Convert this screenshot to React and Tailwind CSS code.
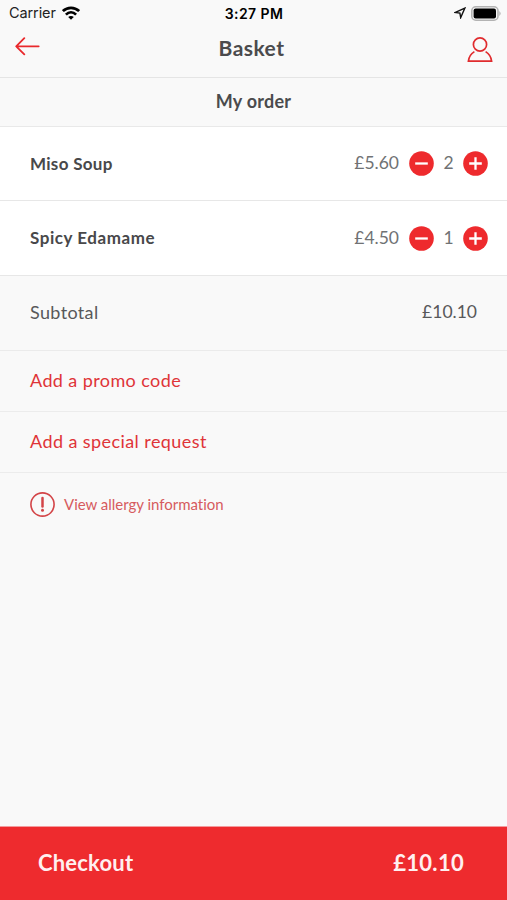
const items = [
  { name: 'Miso Soup', price: '£5.60', count: 2, nameClass: 'tracking-[0.3px]', row: 'h-[74px]' },
  { name: 'Spicy Edamame', price: '£4.50', count: 1, nameClass: 'tracking-[0.55px]', row: 'h-[75px]' },
];

function RoundButton({ plus }) {
  return (
    <button className="block size-[25px] shrink-0" aria-label={plus ? 'Increase' : 'Decrease'}>
      <svg width="25" height="25" viewBox="0 0 25 25">
        <circle cx="12.5" cy="12.5" r="12.3" fill="#ee2a2d" />
        <path d={plus ? 'M6.2 12.5H18.8M12.5 6.2V18.8' : 'M6.2 12.5H18.8'} stroke="#fff" strokeWidth="2.3" />
      </svg>
    </button>
  );
}

function StatusBar() {
  return (
    <div className="grid h-7 grid-cols-3 items-center pb-[2px] pl-[9px] pr-[6px] font-['Inter',sans-serif] text-black">
      <div className="flex items-center gap-[6px]">
        <span className="text-[14.5px] tracking-[-0.1px] text-[#222]">Carrier</span>
        <svg width="18" height="14" viewBox="0 0 18 14" fill="none" stroke="#000" strokeWidth="2.7">
          <path d="M0.9 5.1C5.5 0.7 12.5 0.7 17.1 5.1" />
          <path d="M3.9 8.6C6.9 5.7 11.1 5.7 14.1 8.6" />
          <path d="M9 13.8L6.2 11C7.8 9.6 10.2 9.6 11.8 11Z" fill="#000" stroke="none" />
        </svg>
      </div>
      <span className="-ml-[2px] text-center text-[14px] font-semibold tracking-[0.4px]">3:27 PM</span>
      <div className="flex items-center justify-end gap-[5px]">
        <svg width="12" height="12" viewBox="0 0 12 12" fill="none" stroke="#111" strokeWidth="1.4">
          <path d="M10.8 1.2L1.4 5.4L5.9 6.1L6.7 10.6Z" />
        </svg>
        <svg width="30" height="15" viewBox="0 0 30 15">
          <rect x="0.8" y="0.8" width="26.2" height="13.4" rx="4" fill="#f8f8f8" stroke="#b3b3b3" strokeWidth="1.6" />
          <rect x="2.6" y="2.6" width="22.4" height="9.8" rx="2" fill="#000" />
          <path d="M28.3 5Q31 7.5 28.3 10Z" fill="#b3b3b3" />
        </svg>
      </div>
    </div>
  );
}

export default function App() {
  return (
    <div className="flex h-[900px] w-[507px] flex-col overflow-hidden bg-[#f9f9f9] font-['Lato',sans-serif] text-[18px] text-[#58585a] [font-variant-ligatures:none]">
      <StatusBar />
      <header className="flex h-[50px] items-start justify-between border-b border-[#e5e5e5] pl-[15px] pr-[14px]">
        <svg className="mt-[8px]" width="26" height="20" viewBox="0 0 26 20" fill="none" stroke="#e9292c" strokeWidth="1.8" strokeLinecap="round" strokeLinejoin="round">
          <path d="M23.7 10.3H1.2M9.3 2.2L1.2 10.3L9.3 18.4" />
        </svg>
        <h1 className="-ml-[5px] mt-[5px] text-[21px] leading-[30px] font-bold tracking-[0.45px] text-[#4b4b4d]">Basket</h1>
        <svg className="mt-[8px]" width="26" height="28" viewBox="0 0 26 28" fill="none" stroke="#e02b2e" strokeWidth="1.7">
          <circle cx="13" cy="8.5" r="6.6" />
          <path d="M7.4 15.6C4.3 17.5 1.8 21 1.4 25.2H24.6C24.2 21 21.7 17.5 18.6 15.6" />
        </svg>
      </header>
      <h2 className="flex h-[49px] items-center justify-center border-b border-[#e9e9e9] pb-[2px] text-[18px] font-bold tracking-[0.25px] text-[#4b4b4d]">
        My order
      </h2>
      {items.map((item) => (
        <div key={item.name} className={`flex items-center border-b border-[#e7e7e7] bg-white pl-[30px] pr-[19px] ${item.row}`}>
          <span className={`flex-1 text-[17px] font-bold text-[#48484a] ${item.nameClass}`}>{item.name}</span>
          <span className="mr-[10px] text-[17.5px] text-[#707274]">{item.price}</span>
          <RoundButton />
          <span className="w-[29px] text-center text-[17.5px] text-[#707274]">{item.count}</span>
          <RoundButton plus />
        </div>
      ))}
      <div className="flex h-[75px] items-center justify-between border-b border-[#ebebeb] px-[30px] pb-px">
        <span className="tracking-[0.35px]">Subtotal</span>
        <span className="text-[17.5px]">£10.10</span>
      </div>
      <div className="flex h-[61px] items-center border-b border-[#ececec] px-[30px] pb-[2px] tracking-[0.4px] text-[#df3438]">Add a promo code</div>
      <div className="flex h-[61px] items-center border-b border-[#ececec] px-[30px] pb-[2px] tracking-[0.42px] text-[#df3438]">Add a special request</div>
      <div className="flex h-[62px] items-center gap-[9px] px-[30px] text-[15px] text-[#d65b5e]">
        <svg width="25" height="25" viewBox="0 0 25 25" fill="none" stroke="#d34447">
          <circle cx="12.5" cy="12.5" r="11.6" strokeWidth="1.6" />
          <path d="M12.5 6V14.6" strokeWidth="2.5" strokeLinecap="round" />
          <circle cx="12.5" cy="18.3" r="1.5" fill="#d34447" stroke="none" />
        </svg>
        <span className="tracking-[-0.02px]">View allergy information</span>
      </div>
      <footer className="mt-auto flex h-[74px] items-center justify-between border-t border-[#f39b9d] bg-[#ee2b2e] pl-[38px] pr-[43px] pb-[3px] text-[22px] font-bold text-[#fff0f0]">
        <span className="tracking-[0.2px]">Checkout</span>
        <span className="tracking-[0.3px]">£10.10</span>
      </footer>
    </div>
  );
}
